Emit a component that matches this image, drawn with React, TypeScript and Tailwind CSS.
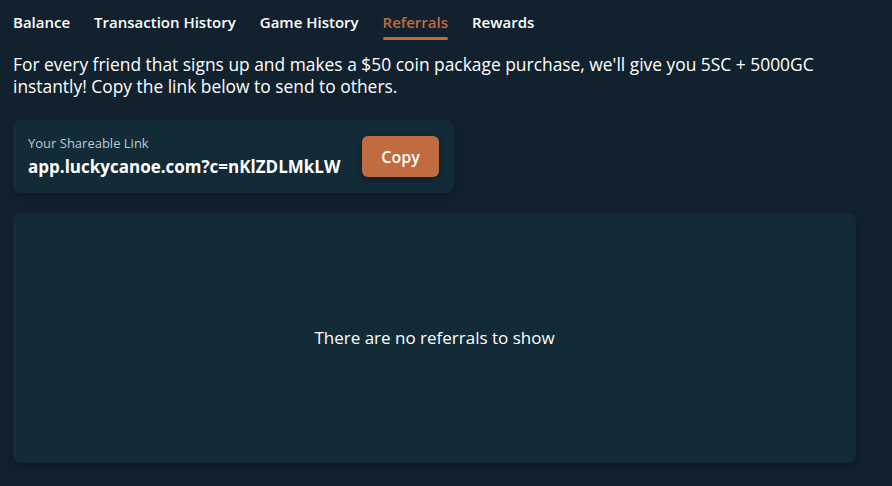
const tabs = ["Balance", "Transaction History", "Game History", "Referrals", "Rewards"];

export default function App() {
  const active = "Referrals";
  return (
    <div className="h-[486px] w-[892px] overflow-hidden bg-[#11222e] px-[13px] text-white font-['Open_Sans',sans-serif]">
      {/* Tabs */}
      <nav className="flex gap-6 pt-[11px]">
        {tabs.map((t) => (
          <div key={t} className="flex flex-col">
            <span
              className={`text-[15px] font-semibold leading-[22px] ${t === active ? "text-[#c26a3e]" : "text-white"}`}
            >
              {t}
            </span>
            <span className={`mt-[4px] h-[3px] rounded-full ${t === active ? "bg-[#c26a3e]" : "bg-transparent"}`} />
          </div>
        ))}
      </nav>

      {/* Intro */}
      <p className="mt-[13px] w-[843px] text-[17.4px] leading-[22px] text-white">
        For every friend that signs up and makes a $50 coin package purchase, we'll give you 5SC + 5000GC instantly! Copy
        the link below to send to others.
      </p>

      {/* Link card */}
      <div className="mt-[23px] flex w-[441px] items-center justify-between rounded-lg bg-[#132a37] py-[14px] pl-[15px] pr-[15px] shadow-[0_4px_10px_rgba(0,0,0,0.25)]">
        <div className="flex flex-col">
          <span className="text-[13px] leading-[18px] text-[#b9cdd8]">Your Shareable Link</span>
          <span className="mt-[3px] text-[17px] font-bold leading-[24px] text-white">app.luckycanoe.com?c=nKlZDLMkLW</span>
        </div>
        <button className="h-[41px] w-[77px] rounded-md bg-[#c06c40] text-[16px] font-semibold text-white shadow-[0_3px_6px_rgba(0,0,0,0.3)]">
          Copy
        </button>
      </div>

      {/* Referrals list */}
      <div className="mt-[20px] flex h-[250px] w-[843px] items-center justify-center rounded-lg bg-[#132a37] shadow-[0_4px_10px_rgba(0,0,0,0.25)]">
        <span className="text-[17px] text-white">There are no referrals to show</span>
      </div>
    </div>
  );
}
